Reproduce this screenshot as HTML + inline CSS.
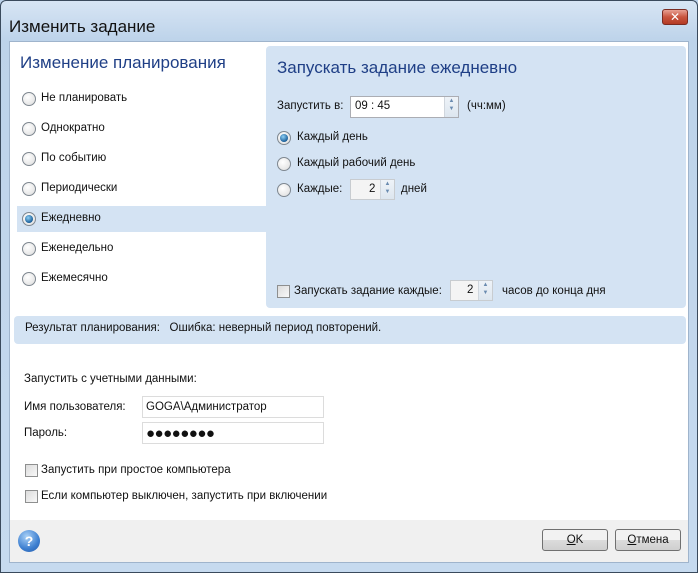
<!DOCTYPE html>
<html><head><meta charset="utf-8"><style>
*{margin:0;padding:0;box-sizing:border-box}
body{width:698px;height:573px;overflow:hidden;background:#bcd2ea;font-family:"Liberation Sans","DejaVu Sans",sans-serif;font-size:11.5px;color:#111;position:relative}
.a{position:absolute;white-space:nowrap}
#frame{position:absolute;left:0;top:0;width:698px;height:573px;border:1px solid #3a4a5c;border-radius:6px 6px 0 0;background:linear-gradient(#d7e5f4,#bdd3ea 40px,#c6daef)}
#client{position:absolute;left:9px;top:41px;width:680px;height:522px;background:#fff;border:1px solid #9fb4cc}
.rad{position:absolute;width:14px;height:14px;border-radius:50%;border:1px solid #7e8790;background:radial-gradient(circle at 40% 35%,#fff,#dcdcdc)}
.rad.on::after{content:"";position:absolute;left:2px;top:2px;width:8px;height:8px;border-radius:50%;background:radial-gradient(circle at 40% 35%,#8fd0f5,#1a5f9a 70%,#0c3a66)}
.cb{position:absolute;width:13px;height:13px;border:1px solid #8e8f8f;background:linear-gradient(135deg,#dcdcdc,#f8f8f8)}
.inp{position:absolute;background:#fff;border:1px solid #abadb3}
.btn{position:absolute;height:22px;border:1px solid #707070;border-radius:3px;background:linear-gradient(#f2f2f2 50%,#dcdcdc 50%,#cfcfcf);text-align:center;line-height:20px}
.spin{position:absolute;width:14px;border-left:1px solid #d0d6dd;background:linear-gradient(#eef3f8,#dde6ef);font-size:6px;color:#6a8bb0;text-align:center;line-height:8px}
</style></head><body>
<div id="frame"></div>
<div class="a" style="left:9px;top:17px;font-size:17px;color:#111">Изменить задание</div>
<div class="a" style="left:662px;top:9px;width:26px;height:16px;border:1px solid #7a2b22;border-radius:3px;background:linear-gradient(#e8a093,#c9553f 50%,#b33a24);color:#fff;font-weight:bold;font-size:12px;text-align:center;line-height:14px">✕</div>
<div id="client"></div>
<div class="a" style="left:20px;top:53px;font-size:17px;color:#1f3f86">Изменение планирования</div>
<div class="a" style="left:266px;top:46px;width:420px;height:262px;background:#d4e3f3;border-radius:4px"></div>
<div class="a" style="left:17px;top:206px;width:249px;height:26px;background:#d4e3f3"></div>
<div class="rad" style="left:22px;top:92px"></div><div class="a" style="left:41px;top:92px">Не планировать</div>
<div class="rad" style="left:22px;top:122px"></div><div class="a" style="left:41px;top:122px">Однократно</div>
<div class="rad" style="left:22px;top:152px"></div><div class="a" style="left:41px;top:152px">По событию</div>
<div class="rad" style="left:22px;top:182px"></div><div class="a" style="left:41px;top:182px">Периодически</div>
<div class="rad on" style="left:22px;top:212px"></div><div class="a" style="left:41px;top:212px">Ежедневно</div>
<div class="rad" style="left:22px;top:242px"></div><div class="a" style="left:41px;top:242px">Еженедельно</div>
<div class="rad" style="left:22px;top:272px"></div><div class="a" style="left:41px;top:272px">Ежемесячно</div>

<div class="a" style="left:277px;top:58px;font-size:17px;color:#1f3f86">Запускать задание ежедневно</div>
<div class="a" style="left:277px;top:100px">Запустить в:</div>
<div class="inp" style="left:350px;top:96px;width:109px;height:22px"><span class="a" style="left:4px;top:3px">09 : 45</span><div class="spin" style="right:0;top:0;height:20px">▲<br>▼</div></div>
<div class="a" style="left:467px;top:100px">(чч:мм)</div>
<div class="rad on" style="left:277px;top:131px"></div><div class="a" style="left:297px;top:131px">Каждый день</div>
<div class="rad" style="left:277px;top:157px"></div><div class="a" style="left:297px;top:157px">Каждый рабочий день</div>
<div class="rad" style="left:277px;top:183px"></div><div class="a" style="left:297px;top:183px">Каждые:</div>
<div class="inp" style="left:350px;top:179px;width:45px;height:21px;background:#f4f4f4;border-color:#c8ccd0"><span class="a" style="left:18px;top:3px">2</span><div class="spin" style="right:0;top:0;height:19px">▲<br>▼</div></div>
<div class="a" style="left:401px;top:183px">дней</div>
<div class="cb" style="left:277px;top:285px"></div><div class="a" style="left:294px;top:285px">Запускать задание каждые:</div>
<div class="inp" style="left:450px;top:280px;width:43px;height:21px;background:#f4f4f4;border-color:#c8ccd0"><span class="a" style="left:16px;top:3px">2</span><div class="spin" style="right:0;top:0;height:19px">▲<br>▼</div></div>
<div class="a" style="left:502px;top:285px">часов до конца дня</div>

<div class="a" style="left:14px;top:316px;width:672px;height:28px;background:#d4e3f3;border-radius:4px"></div>
<div class="a" style="left:25px;top:322px">Результат планирования:&nbsp;&nbsp; Ошибка: неверный период повторений.</div>

<div class="a" style="left:24px;top:373px">Запустить с учетными данными:</div>
<div class="a" style="left:24px;top:401px">Имя пользователя:</div>
<div class="inp" style="left:142px;top:396px;width:182px;height:22px;border-color:#dcdcdc"><span class="a" style="left:3px;top:4px">GOGA\Администратор</span></div>
<div class="a" style="left:24px;top:427px">Пароль:</div>
<div class="inp" style="left:142px;top:422px;width:182px;height:22px;border-color:#dcdcdc"><span class="a" style="left:3px;top:2px;font-size:15px;letter-spacing:-0.5px">●●●●●●●●</span></div>
<div class="cb" style="left:25px;top:464px"></div><div class="a" style="left:41px;top:464px">Запустить при простое компьютера</div>
<div class="cb" style="left:25px;top:490px"></div><div class="a" style="left:41px;top:490px">Если компьютер выключен, запустить при включении</div>

<div class="a" style="left:10px;top:520px;width:678px;height:42px;background:#f0f0f0"></div>
<div class="a" style="left:18px;top:530px;width:22px;height:22px;border-radius:50%;background:radial-gradient(circle at 40% 30%,#a9d1f7,#3d7fd0 60%,#2459a8);color:#fff;font-weight:bold;font-size:14px;text-align:center;line-height:22px">?</div>
<div class="btn" style="left:542px;top:529px;width:66px"><u>O</u>K</div>
<div class="btn" style="left:615px;top:529px;width:66px"><u>О</u>тмена</div>
</body></html>
